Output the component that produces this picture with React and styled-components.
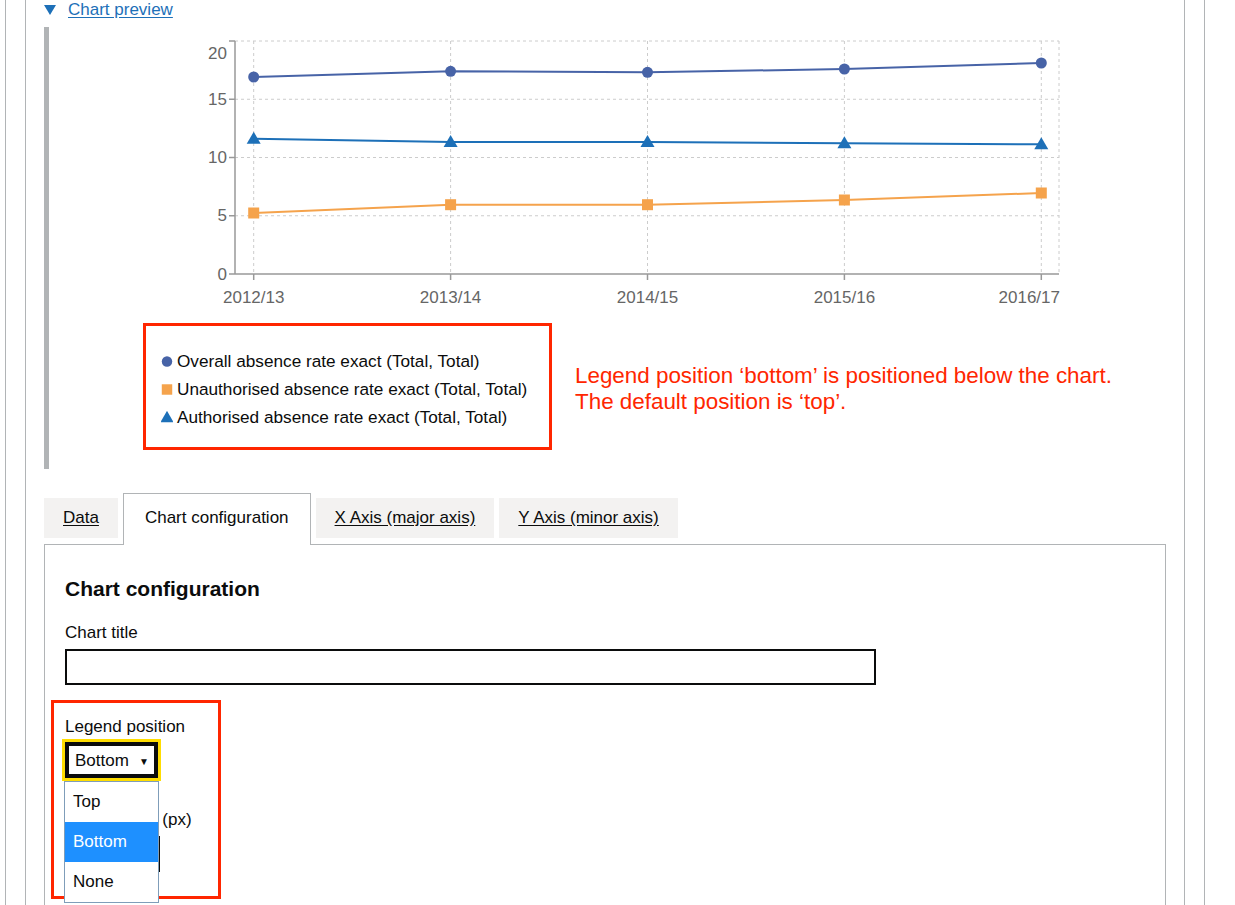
import React from "react";
import styled, { createGlobalStyle } from "styled-components";

const GlobalStyle = createGlobalStyle`
  html, body {
    margin: 0;
    padding: 0;
    background: #ffffff;
    overflow: hidden;
  }
  body {
    font-family: "Liberation Sans", Arial, sans-serif;
    color: #0b0c0c;
  }
`;

const Frame = styled.div`
  margin-left: 5px;
  width: 1200px;
  min-height: 905px;
  box-sizing: border-box;
  padding: 0 19px;
  border-left: 1px solid #b1b4b6;
  border-right: 1px solid #b1b4b6;
`;

const Page = styled.div`
  min-height: 905px;
  padding: 0 18px;
  border-left: 1px solid #b1b4b6;
  border-right: 1px solid #b1b4b6;
`;

const Summary = styled.div`
  display: flex;
  align-items: center;
  gap: 12px;
  height: 20px;
`;

const SummaryArrow = styled.span`
  width: 12px;
  height: 10px;
  background: #1d70b8;
  clip-path: polygon(0 0, 100% 0, 50% 100%);
`;

const SummaryLink = styled.a`
  color: #1d70b8;
  font-size: 17px;
  text-decoration: underline;
  text-underline-offset: 2px;
`;

const Inset = styled.div`
  margin-top: 7px;
  height: 442px;
  box-sizing: border-box;
  border-left: 5px solid #b1b4b6;
`;

const ChartSvg = styled.svg`
  display: block;
  font-family: "Liberation Sans", Arial, sans-serif;
`;

const LegendRow = styled.div`
  display: flex;
  align-items: center;
  margin: 6px 0 0 94px;
`;

const Callout = styled.div`
  border: 3px solid #ff2600;
  box-sizing: border-box;
  width: ${(p) => p.$width}px;
  height: ${(p) => p.$height}px;
  padding: ${(p) => p.$padding};
  margin-left: ${(p) => p.$offset || 0}px;
  margin-top: ${(p) => p.$top || 0}px;
`;

const LegendItem = styled.div`
  display: flex;
  align-items: center;
  gap: 4px;
  font-size: 17.2px;
  line-height: 28px;
  color: #0b0c0c;
`;

const Note = styled.p`
  margin: 0 0 0 23px;
  padding-top: 5px;
  color: #ff2600;
  font-size: 22.4px;
  line-height: 26px;
`;

const TabList = styled.div`
  display: flex;
  align-items: flex-end;
  gap: 5px;
  margin-top: 24px;
`;

const Tab = styled.a`
  display: block;
  font-size: 17px;
  line-height: 20px;
  color: #0b0c0c;
  ${(p) =>
    p.$selected
      ? `
    position: relative;
    background: #ffffff;
    border: 1px solid #b1b4b6;
    border-bottom: 0;
    padding: 14px 21px 17px;
    margin-bottom: -1px;
    text-decoration: none;
  `
      : `
    background: #f3f2f1;
    padding: 10px 19px;
    margin-bottom: 6px;
    text-decoration: underline;
    text-underline-offset: 2px;
  `}
`;

const Panel = styled.div`
  border: 1px solid #b1b4b6;
  padding: 30px 20px;
  min-height: 400px;
`;

const Heading = styled.h2`
  margin: 0;
  font-size: 21px;
  line-height: 28px;
  font-weight: 700;
`;

const Label = styled.label`
  display: block;
  margin-top: ${(p) => p.$gap || 0}px;
  font-size: 17px;
  line-height: 25px;
`;

const TextInput = styled.div`
  margin-top: 4px;
  width: ${(p) => p.$width}px;
  height: 36px;
  box-sizing: border-box;
  border: 2px solid #0b0c0c;
  background: #ffffff;
`;

const SelectWrap = styled.div`
  position: relative;
  margin-top: 3px;
  width: 93px;
`;

const Select = styled.div`
  display: flex;
  align-items: center;
  justify-content: space-between;
  height: 36px;
  box-sizing: border-box;
  padding: 2px 7px 0 8px;
  border: 2px solid #0b0c0c;
  box-shadow: inset 0 0 0 2px #0b0c0c;
  outline: 3px solid #ffdd00;
  font-size: 17px;
`;

const Caret = styled.span`
  font-size: 10px;
`;

const Dropdown = styled.ul`
  position: absolute;
  z-index: 2;
  top: 39px;
  left: -1px;
  width: 95px;
  margin: 0;
  padding: 0;
  list-style: none;
  box-sizing: border-box;
  border: 1px solid #7f9db9;
  background: #ffffff;
`;

const Option = styled.li`
  height: 40px;
  line-height: 40px;
  padding-left: 8px;
  font-size: 17px;
  background: ${(p) => (p.$active ? "#1e90ff" : "#ffffff")};
  color: ${(p) => (p.$active ? "#ffffff" : "#0b0c0c")};
`;

const xs = [253.7, 450.6, 647.5, 844.4, 1041.3];
const years = ["2012/13", "2013/14", "2014/15", "2015/16", "2016/17"];
const yTicks = [
  { v: "20", y: 41, ly: 53 },
  { v: "15", y: 99.25 },
  { v: "10", y: 157.5 },
  { v: "5", y: 215.75 },
  { v: "0", y: 274 },
];

const series = [
  { name: "Overall absence rate exact (Total, Total)", color: "#4763a7", shape: "circle", ys: [77, 71.3, 72.3, 69, 63] },
  { name: "Unauthorised absence rate exact (Total, Total)", color: "#f5a34c", shape: "square", ys: [213, 204.7, 204.7, 200, 193] },
  { name: "Authorised absence rate exact (Total, Total)", color: "#1d70b8", shape: "triangle", ys: [138.7, 142, 142, 143.3, 144.3] },
];

const Marker = ({ shape, x, y, color, size = 1 }) => {
  if (shape === "circle") return <circle cx={x} cy={y} r={5.5 * size} fill={color} />;
  if (shape === "square")
    return <rect x={x - 5.5 * size} y={y - 5.5 * size} width={11 * size} height={11 * size} fill={color} />;
  return (
    <polygon
      points={`${x - 7 * size},${y + 5 * size} ${x + 7 * size},${y + 5 * size} ${x},${y - 7 * size}`}
      fill={color}
    />
  );
};

const Chart = () => (
  <ChartSvg width="1030" height="290" viewBox="49 27 1030 290">
    <g stroke="#cccccc" strokeDasharray="3 3">
      {yTicks.slice(0, 4).map((t) => (
        <line key={t.v} x1="235" x2="1059" y1={t.y} y2={t.y} />
      ))}
      {[...xs, 1059].map((x) => (
        <line key={x} x1={x} x2={x} y1="41" y2="274" />
      ))}
    </g>
    <g stroke="#999999" strokeWidth="1.5">
      <line x1="235" x2="235" y1="41" y2="274" />
      <line x1="235" x2="1059" y1="274" y2="274" />
      {yTicks.map((t) => (
        <line key={t.v} x1="229" x2="235" y1={t.y} y2={t.y} />
      ))}
      {xs.map((x) => (
        <line key={x} x1={x} x2={x} y1="274" y2="280" />
      ))}
    </g>
    <g fill="#666666" fontSize="17">
      {yTicks.map((t) => (
        <text key={t.v} x="227" y={t.ly || t.y} textAnchor="end" dominantBaseline="central">
          {t.v}
        </text>
      ))}
      {years.map((yr, i) => (
        <text
          key={yr}
          x={i === 4 ? 1060 : xs[i]}
          y="297"
          textAnchor={i === 4 ? "end" : "middle"}
          dominantBaseline="central"
        >
          {yr}
        </text>
      ))}
    </g>
    {series.map((s) => (
      <g key={s.name}>
        <polyline
          points={s.ys.map((y, i) => `${xs[i]},${y}`).join(" ")}
          fill="none"
          stroke={s.color}
          strokeWidth="2"
        />
        {s.ys.map((y, i) => (
          <Marker key={i} shape={s.shape} x={xs[i]} y={y} color={s.color} />
        ))}
      </g>
    ))}
  </ChartSvg>
);

const App = () => {
  return (
    <>
      <GlobalStyle />
      <Frame>
        <Page>
          <Summary>
            <SummaryArrow />
            <SummaryLink href="#preview">Chart preview</SummaryLink>
          </Summary>
          <Inset>
            <Chart />
            <LegendRow>
              <Callout $width={409} $height={127} $padding="21px 0 0 15px">
                {series.map((s) => (
                  <LegendItem key={s.name}>
                    <svg width="12" height="12" viewBox="0 0 12 12">
                      <Marker shape={s.shape} x={6} y={6.5} color={s.color} size={0.95} />
                    </svg>
                    {s.name}
                  </LegendItem>
                ))}
              </Callout>
              <Note>
                Legend position ‘bottom’ is positioned below the chart.
                <br />
                The default position is ‘top’.
              </Note>
            </LegendRow>
          </Inset>

          <TabList>
            <Tab href="#data">Data</Tab>
            <Tab $selected>Chart configuration</Tab>
            <Tab href="#x-axis">X Axis (major axis)</Tab>
            <Tab href="#y-axis">Y Axis (minor axis)</Tab>
          </TabList>
          <Panel>
            <Heading>Chart configuration</Heading>
            <Label $gap={17}>Chart title</Label>
            <TextInput $width={811} />
            <Callout $width={170} $height={199} $padding="11px 0 0 11px" $offset={-14} $top={15}>
              <Label>Legend position</Label>
              <SelectWrap>
                <Select>
                  Bottom
                  <Caret>▼</Caret>
                </Select>
                <Dropdown>
                  <Option>Top</Option>
                  <Option $active>Bottom</Option>
                  <Option>None</Option>
                </Dropdown>
              </SelectWrap>
              <Label $gap={29}>Chart height (px)</Label>
              <TextInput $width={95} />
            </Callout>
          </Panel>
        </Page>
      </Frame>
    </>
  );
};

export default App;
